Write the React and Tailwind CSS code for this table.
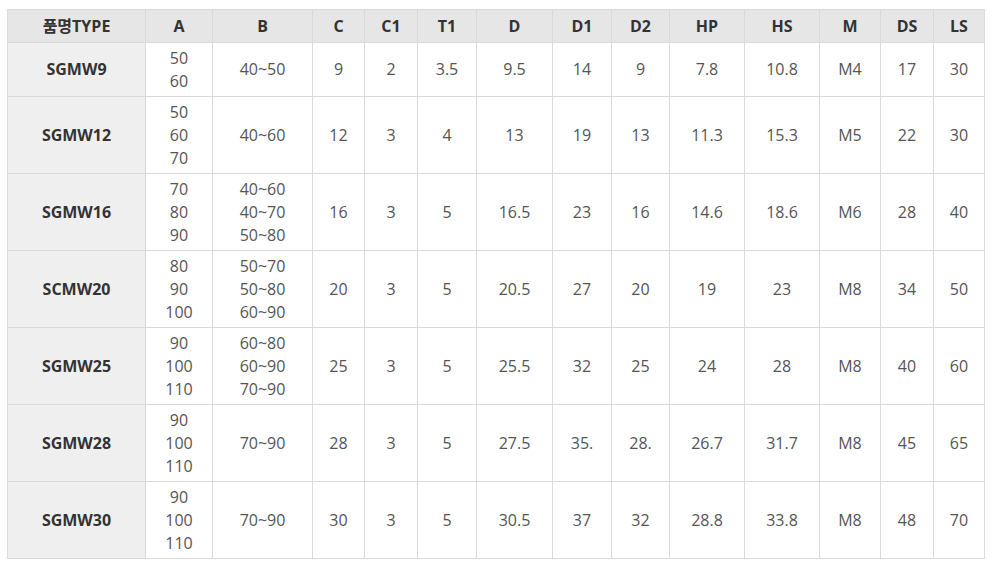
import React from 'react';

const widths = [138, 67, 100, 52, 53, 59, 76, 59, 58, 75, 75, 61, 53, 51];
const headers = ['품명TYPE', 'A', 'B', 'C', 'C1', 'T1', 'D', 'D1', 'D2', 'HP', 'HS', 'M', 'DS', 'LS'];

// each row: type, A values, B values, then the single values
const rows = [
  { type: 'SGMW9', a: ['50', '60'], b: ['40~50'], rest: ['9', '2', '3.5', '9.5', '14', '9', '7.8', '10.8', 'M4', '17', '30'] },
  { type: 'SGMW12', a: ['50', '60', '70'], b: ['40~60'], rest: ['12', '3', '4', '13', '19', '13', '11.3', '15.3', 'M5', '22', '30'] },
  { type: 'SGMW16', a: ['70', '80', '90'], b: ['40~60', '40~70', '50~80'], rest: ['16', '3', '5', '16.5', '23', '16', '14.6', '18.6', 'M6', '28', '40'] },
  { type: 'SCMW20', a: ['80', '90', '100'], b: ['50~70', '50~80', '60~90'], rest: ['20', '3', '5', '20.5', '27', '20', '19', '23', 'M8', '34', '50'] },
  { type: 'SGMW25', a: ['90', '100', '110'], b: ['60~80', '60~90', '70~90'], rest: ['25', '3', '5', '25.5', '32', '25', '24', '28', 'M8', '40', '60'] },
  { type: 'SGMW28', a: ['90', '100', '110'], b: ['70~90'], rest: ['28', '3', '5', '27.5', '35.', '28.', '26.7', '31.7', 'M8', '45', '65'] },
  { type: 'SGMW30', a: ['90', '100', '110'], b: ['70~90'], rest: ['30', '3', '5', '30.5', '37', '32', '28.8', '33.8', 'M8', '48', '70'] },
];

const Lines = ({ items }) => (
  <>
    {items.map((v, i) => (
      <div key={i}>{v}</div>
    ))}
  </>
);

const App = () => {
  return (
    <div className="w-[1000px] h-[570px] bg-white pl-[7px] pt-[9px]" style={{ fontFamily: '"Open Sans", "Noto Sans CJK KR", sans-serif' }}>
      <table className="table-fixed border-collapse w-[978px] text-[16px] leading-[23px] text-center">
        <colgroup>
          {widths.map((w, i) => (
            <col key={i} style={{ width: w }} />
          ))}
        </colgroup>
        <thead>
          <tr className="h-[33px] bg-[#e6e6e6]">
            {headers.map((h) => (
              <th key={h} className="border border-[#dadada] font-bold text-[#333] p-0 align-middle">
                {h}
              </th>
            ))}
          </tr>
        </thead>
        <tbody>
          {rows.map((r) => (
            <tr key={r.type} className={r.a.length === 2 ? 'h-[54px]' : 'h-[77px]'}>
              <td className="border border-[#dadada] bg-[#efefef] font-bold text-[#333] p-0 align-middle">{r.type}</td>
              <td className="border border-[#dadada] text-[#555] p-0 align-middle">
                <Lines items={r.a} />
              </td>
              <td className="border border-[#dadada] text-[#555] p-0 align-middle">
                <Lines items={r.b} />
              </td>
              {r.rest.map((v, i) => (
                <td key={i} className="border border-[#dadada] text-[#555] p-0 align-middle">
                  {v}
                </td>
              ))}
            </tr>
          ))}
        </tbody>
      </table>
    </div>
  );
};

export default App;
